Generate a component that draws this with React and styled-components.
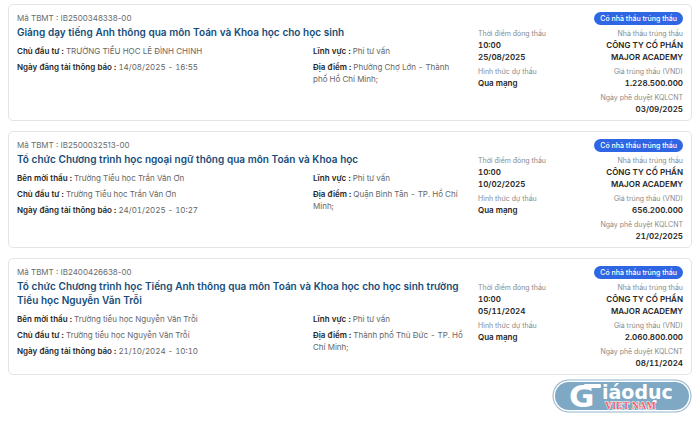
import React from "react";
import styled, { createGlobalStyle } from "styled-components";

const tenders = [
  {
    code: "IB2500348338-00",
    title: "Giảng dạy tiếng Anh thông qua môn Toán và Khoa học cho học sinh",
    info: [
      ["Chủ đầu tư", "TRƯỜNG TIỂU HỌC LÊ ĐÌNH CHINH"],
      ["Ngày đăng tải thông báo", "14/08/2025 - 16:55"],
    ],
    place: "Phường Chợ Lớn - Thành phố Hồ Chí Minh;",
    closeDate: "25/08/2025",
    price: "1.228.500.000",
    approved: "03/09/2025",
  },
  {
    code: "IB2500032513-00",
    title: "Tổ chức Chương trình học ngoại ngữ thông qua môn Toán và Khoa học",
    info: [
      ["Bên mời thầu", "Trường Tiểu học Trần Văn Ơn"],
      ["Chủ đầu tư", "Trường Tiểu học Trần Văn Ơn"],
      ["Ngày đăng tải thông báo", "24/01/2025 - 10:27"],
    ],
    place: "Quận Bình Tân - TP. Hồ Chí Minh;",
    closeDate: "10/02/2025",
    price: "656.200.000",
    approved: "21/02/2025",
  },
  {
    code: "IB2400426638-00",
    title:
      "Tổ chức Chương trình học Tiếng Anh thông qua môn Toán và Khoa học cho học sinh trường Tiểu học Nguyễn Văn Trỗi",
    info: [
      ["Bên mời thầu", "Trường tiểu học Nguyễn Văn Trỗi"],
      ["Chủ đầu tư", "Trường tiểu học Nguyễn Văn Trỗi"],
      ["Ngày đăng tải thông báo", "21/10/2024 - 10:10"],
    ],
    place: "Thành phố Thủ Đức - TP. Hồ Chí Minh;",
    closeDate: "05/11/2024",
    price: "2.060.800.000",
    approved: "08/11/2024",
  },
];

const InfoLine = ({ label, children }) => (
  <Info>
    <b>{label} :</b> {children}
  </Info>
);

const TenderCard = ({ tender }) => (
  <Card>
    <Main>
      <Code>Mã TBMT : {tender.code}</Code>
      <Title>{tender.title}</Title>
      <InfoGrid>
        <InfoColumn>
          {tender.info.map(([label, value]) => (
            <InfoLine key={label} label={label}>
              {value}
            </InfoLine>
          ))}
        </InfoColumn>
        <InfoColumn>
          <InfoLine label="Lĩnh vực">Phi tư vấn</InfoLine>
          <InfoLine label="Địa điểm">{tender.place}</InfoLine>
        </InfoColumn>
      </InfoGrid>
    </Main>
    <Side>
      <Badge>Có nhà thầu trúng thầu</Badge>
      <FactGrid>
        <Facts>
          <Fact>
            <dt>Thời điểm đóng thầu</dt>
            <dd>10:00</dd>
            <dd>{tender.closeDate}</dd>
          </Fact>
          <Fact>
            <dt>Hình thức dự thầu</dt>
            <dd>Qua mạng</dd>
          </Fact>
        </Facts>
        <Facts $align="right">
          <Fact>
            <dt>Nhà thầu trúng thầu</dt>
            <dd>CÔNG TY CỔ PHẦN</dd>
            <dd>MAJOR ACADEMY</dd>
          </Fact>
          <Fact>
            <dt>Giá trúng thầu (VND)</dt>
            <dd>{tender.price}</dd>
          </Fact>
          <Fact>
            <dt>Ngày phê duyệt KQLCNT</dt>
            <dd>{tender.approved}</dd>
          </Fact>
        </Facts>
      </FactGrid>
    </Side>
  </Card>
);

const Logo = () => (
  <LogoSvg viewBox="0 0 140 34" role="img" aria-label="Giáo dục Việt Nam">
    <rect x="0.5" y="0.5" width="139" height="33" rx="16.5" fill="#8fb3cb" />
    <rect x="1.5" y="1.5" width="137" height="31" rx="15.5" fill="#fff" />
    <rect x="3" y="3" width="134" height="28" rx="14" fill="#7ea8c3" />
    <g fill="#fff" fontFamily="'DejaVu Sans', sans-serif" fontWeight="bold">
      <text x="17" y="28" fontSize="31">
        G
      </text>
      <rect x="32" y="5" width="17" height="4" rx="1" />
      <text x="50" y="20" fontSize="19">
        iáodục
      </text>
    </g>
    <text
      x="53"
      y="30"
      fontSize="10"
      fontFamily="'Liberation Serif', 'Times New Roman', serif"
      fontWeight="bold"
      fill="#f4606a"
      stroke="#fff"
      strokeWidth="1"
      strokeLinejoin="round"
      paintOrder="stroke"
    >
      VIET NAM
    </text>
  </LogoSvg>
);

const App = () => {
  return (
    <Page>
      <GlobalStyle />
      <List>
        {tenders.map((tender) => (
          <TenderCard key={tender.code} tender={tender} />
        ))}
      </List>
      <Footer>
        <Logo />
      </Footer>
    </Page>
  );
};

export default App;

const GlobalStyle = createGlobalStyle`
  * {
    box-sizing: border-box;
    margin: 0;
  }

  body {
    background: #fff;
    color: #262626;
    font-family: Inter, "Liberation Sans", sans-serif;
    font-size: 8px;
    font-variant-numeric: tabular-nums;
    line-height: 12px;
  }
`;

const Page = styled.main`
  padding: 4px 8px;
`;

const List = styled.div`
  display: flex;
  flex-direction: column;
  gap: 10px;
`;

const Card = styled.article`
  display: grid;
  grid-template-columns: 461fr 205fr;
  padding: 7px 8px 5px;
  border: 1px solid #e4e4e4;
  border-radius: 5px;
`;

const Main = styled.div`
  padding-right: 12px;
`;

const Code = styled.p`
  color: #6b6b6b;
  font-variant-numeric: normal;
`;

const Title = styled.h2`
  margin: 1px 0 6px;
  color: #154c79;
  font-size: 10px;
  font-weight: 600;
  line-height: 14px;
`;

const InfoGrid = styled.div`
  display: grid;
  grid-template-columns: 296fr 151fr;
  padding-right: 2px;
`;

const InfoColumn = styled.div`
  display: flex;
  flex-direction: column;
  gap: 4px;
`;

const Info = styled.p`
  color: #666;

  b {
    color: #262626;
    font-weight: 600;
  }
`;

const Side = styled.div`
  display: flex;
  flex-direction: column;
  gap: 4px;
`;

const Badge = styled.span`
  align-self: flex-end;
  padding: 0 6px;
  border-radius: 7px;
  background: #2f66e3;
  color: #fff;
  font-size: 7px;
  font-weight: 500;
  line-height: 13px;
`;

const FactGrid = styled.div`
  display: flex;
  justify-content: space-between;
`;

const Facts = styled.dl`
  display: flex;
  flex-direction: column;
  gap: 4px;
  text-align: ${({ $align }) => $align || "left"};
`;

const Fact = styled.div`
  dt {
    color: #8a8a8a;
    font-size: 7px;
    line-height: 10px;
  }

  dd {
    font-weight: 600;
  }
`;

const Footer = styled.footer`
  display: flex;
  justify-content: flex-end;
  padding: 4px 0;
`;

const LogoSvg = styled.svg`
  width: 140px;
  height: 34px;
`;
